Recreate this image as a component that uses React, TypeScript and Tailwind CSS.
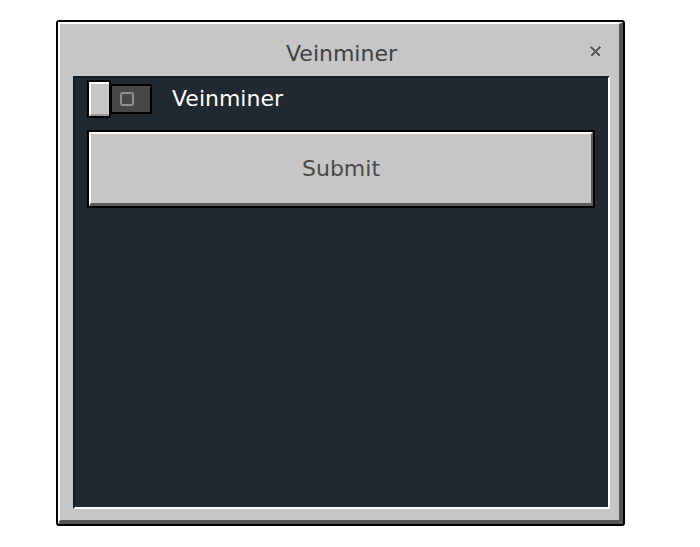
import React from 'react';

const font = { fontFamily: '"DejaVu Sans", "Liberation Sans", sans-serif' };

const CloseIcon: React.FC = () => (
    <svg width="13" height="13" viewBox="0 0 13 13" fill="none" shapeRendering="crispEdges">
        <path d="M2 2L11 11M11 2L2 11" stroke="#5e5e5e" strokeWidth="1.6" />
    </svg>
);

const Toggle: React.FC = () => (
    <div className="flex items-center">
        {/* knob */}
        <div className="relative z-10 w-[24px] h-[38px] border-2 border-black bg-[#c6c6c6]">
            <div className="w-full h-full border-l-2 border-t-2 border-white border-b-2 border-b-[#9a9a9a]" />
        </div>
        {/* track */}
        <div className="-ml-[1px] w-[42px] h-[30px] border-2 border-black bg-[#474747] flex items-center pl-[8px]">
            <div className="w-[14px] h-[14px] border-2 border-[#8e8e8e] rounded-[3px]" />
        </div>
    </div>
);

export default function App() {
    return (
        <div className="w-[700px] h-[547px] bg-white pt-[20px] pl-[56px]" style={font}>
            <div className="w-[569px] h-[506px] border-2 border-black rounded-[3px] flex">
                <div className="flex-1 flex flex-col bg-[#c6c6c6] border-t-2 border-l-2 border-white border-r-4 border-b-4 border-r-[#555555] border-b-[#555555] pl-[13px] pr-[9px] pb-[11px]">
                    {/* title bar */}
                    <div className="relative h-[52px] flex items-center justify-center pt-[7px]">
                        <span className="text-[22px] leading-none text-[#3f3f3f]">Veinminer</span>
                        <div className="absolute right-[8px] top-[21px]">
                            <CloseIcon />
                        </div>
                    </div>
                    {/* content */}
                    <div className="flex-1 bg-[#212930] border-t-2 border-l-2 border-[#161b20] border-r-2 border-b-2 border-r-white border-b-white pt-[2px] pl-[12px] pr-[13px]">
                        <div className="flex items-center">
                            <Toggle />
                            <span className="ml-[20px] text-[22px] leading-none text-white">Veinminer</span>
                        </div>
                        <div className="mt-[12px] h-[78px] border-2 border-black">
                            <div className="w-full h-full bg-[#c6c6c6] border-t-2 border-l-2 border-white border-r-2 border-b-[3px] border-r-[#5c5c5c] border-b-[#5c5c5c] flex items-center justify-center">
                                <span className="text-[22px] leading-none text-[#4a4a4a]">Submit</span>
                            </div>
                        </div>
                    </div>
                </div>
            </div>
        </div>
    );
}
